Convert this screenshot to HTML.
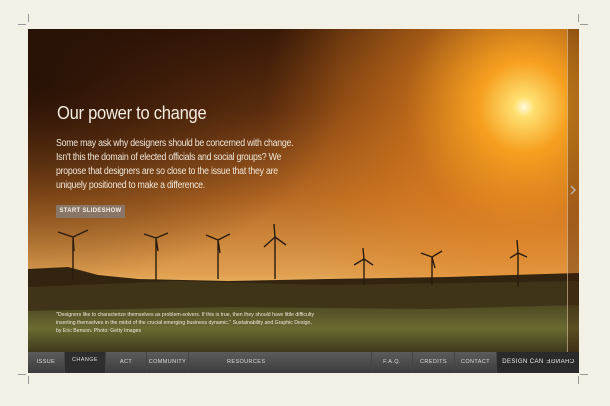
<!DOCTYPE html>
<html><head><style>
*{margin:0;padding:0;box-sizing:border-box}
body{width:610px;height:406px;background:#f3f1e6;position:relative;overflow:hidden;font-family:"Liberation Sans",sans-serif}
#img{position:absolute;left:28px;top:29px;width:551px;height:323px;overflow:hidden;
background:radial-gradient(circle at 496px 78px,#fffbe0 0,#ffe070 10px,#f6a020 45px,rgba(230,130,30,0.6) 120px,rgba(200,100,20,0) 260px),
linear-gradient(to bottom,#3a1a08 0,#6a3410 80px,#b86a24 170px,#e0a050 245px,#e8b060 255px);}
#dark{position:absolute;left:0;top:0;width:320px;height:260px;background:radial-gradient(ellipse at 0 20%,rgba(30,12,4,0.85),rgba(30,12,4,0) 70%)}
.strip{position:absolute;left:539px;top:0;width:12px;height:323px;background:rgba(60,30,10,0.35);border-left:1px solid rgba(255,230,190,0.5)}
h1{position:absolute;left:57px;top:103px;color:#f3ece0;font-weight:normal;font-size:18px;letter-spacing:-0.3px;transform:scaleX(0.92);transform-origin:0 0}
p.b{position:absolute;left:56px;top:137px;width:275px;color:#efe6d8;font-size:10px;line-height:14px;letter-spacing:-0.3px;transform:scaleX(0.88);transform-origin:0 0}
.btn{position:absolute;left:56px;top:205px;width:69px;height:13px;background:#8a7666;color:#f5eee4;font-size:6px;font-weight:bold;line-height:13px;text-align:center;letter-spacing:.3px}
.cap{position:absolute;left:56px;top:311px;width:260px;color:#f0eadc;font-size:5.2px;line-height:8px}
#nav{position:absolute;left:28px;top:352px;width:551px;height:21px;background:linear-gradient(#5c5c5c,#3c3c3c)}
#nav>span{position:absolute;top:0;height:21px;line-height:21px;color:#ddd;font-size:5.5px;letter-spacing:.4px;border-right:1px solid #444}
.mir{display:inline-block;transform:scaleX(-1)}
.corner{position:absolute;background:#999}
</style></head><body>
<div class="corner" style="left:18px;top:24px;width:8px;height:1px"></div>
<div class="corner" style="left:28px;top:14px;width:1px;height:8px"></div>
<div class="corner" style="left:580px;top:24px;width:8px;height:1px"></div>
<div class="corner" style="left:578px;top:14px;width:1px;height:8px"></div>
<div class="corner" style="left:18px;top:374px;width:8px;height:1px"></div>
<div class="corner" style="left:28px;top:376px;width:1px;height:8px"></div>
<div class="corner" style="left:580px;top:374px;width:8px;height:1px"></div>
<div class="corner" style="left:578px;top:376px;width:1px;height:8px"></div>
<div id="img"><div id="dark"></div>
<svg width="551" height="323" style="position:absolute;left:0;top:0">
<defs><linearGradient id="f" x1="0" y1="0" x2="0" y2="1"><stop offset="0" stop-color="#4e4a22"/><stop offset="0.5" stop-color="#6a6a32"/><stop offset="1" stop-color="#3e3a1c"/></linearGradient></defs>
<path d="M0 240 L40 238 L70 246 L110 250 L200 252 L300 250 L420 248 L551 244 L551 323 L0 323Z" fill="#32240f"/>
<path d="M0 258 L150 252 L300 256 L551 252 L551 323 L0 323Z" fill="#3f3318"/>
<path d="M0 282 L200 278 L400 280 L551 276 L551 323 L0 323Z" fill="url(#f)"/>
<g stroke="#2a1c0c" stroke-width="1.4" fill="none">
<path d="M45 250V208M45 208L30 203M45 208L60 201M45 208L46 222"/>
<path d="M128 252V209M128 209L116 205M128 209L140 204M128 209L130 222"/>
<path d="M190 250V211M190 211L178 206M190 211L202 205M190 211L192 224"/>
<path d="M247 250V208M247 208L236 218M247 208L258 216M247 208L246 195"/>
<path d="M336 256V230M336 230L326 236M336 230L345 236M336 230L335 219"/>
<path d="M404 256V228M404 228L393 224M404 228L414 222M404 228L407 239"/>
<path d="M490 258V224M490 224L482 229M490 224L499 228M490 224L489 211"/>
</g>
<path d="M543 157l4 4-4 4" stroke="#fff" stroke-width="1.5" fill="none"/>
</svg>
<div class="strip"></div>
</div>
<h1>Our power to change</h1>
<p class="b">Some may ask why designers should be concerned with change. Isn't this the domain of elected officials and social groups? We propose that designers are so close to the issue that they are uniquely positioned to make a difference.</p>
<div class="btn">START SLIDESHOW</div>
<div class="cap">"Designers like to characterize themselves as problem-solvers. If this is true, then they should have little difficulty inserting themselves in the midst of the crucial emerging business dynamic." Sustainability and Graphic Design, by Eric Benson. Photo: Getty Images</div>
<div id="nav">
<span style="left:0;width:37px;text-align:center">ISSUE</span>
<span style="left:37px;width:41px;text-align:center;background:#2e2e2e;line-height:16px">CHANGE</span>
<span style="left:78px;width:41px;text-align:center">ACT</span>
<span style="left:119px;width:42px;text-align:center">COMMUNITY</span>
<span style="left:161px;width:170px;padding-left:38px;border:none">RESOURCES</span>
<span style="left:343px;width:42px;text-align:center;border-left:1px solid #444">F.A.Q.</span>
<span style="left:385px;width:42px;text-align:center">CREDITS</span>
<span style="left:427px;width:42px;text-align:center">CONTACT</span>
<span style="left:469px;width:82px;text-align:center;background:#2a2a2a;color:#eee;border:none;font-size:6px">DESIGN CAN <span class="mir">CHANGE</span></span>
</div>
</body></html>
